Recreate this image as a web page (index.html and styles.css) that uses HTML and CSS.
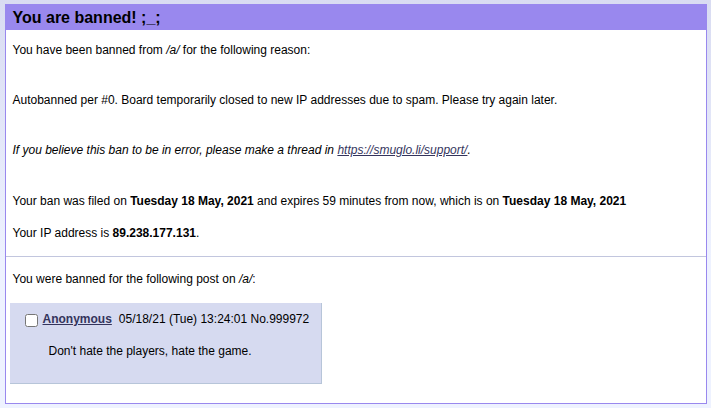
FILE: index.html
```html
<!DOCTYPE html>
<html lang="en">

<head>
    <meta charset="UTF-8">
    <meta name="viewport" content="width=device-width, initial-scale=1.0">
    <title>Banned</title>
    <link rel="stylesheet" href="styles.css">
</head>

<body>
    <div class="ban">
        <h2>You are banned! ;_;</h2>
        <div class="ban-body">
            <p>You have been banned from <em>/a/</em> for the following reason:</p>
            <p class="spaced">Autobanned per #0. Board temporarily closed to new IP addresses due to spam. Please try again later.</p>
            <p class="spaced"><em>If you believe this ban to be in error, please make a thread in <a href="#">https://smuglo.li/support/</a>.</em></p>
            <p class="spaced wide">Your ban was filed on <strong>Tuesday 18 May, 2021</strong> and expires 59 minutes from now, which is on <strong>Tuesday 18 May, 2021</strong></p>
            <p class="close">Your IP address is <strong>89.238.177.131</strong>.</p>
        </div>
        <hr class="rule">
        <div class="ban-post">
            <p>You were banned for the following post on <em>/a/</em>:</p>
            <div class="post">
                <div class="intro">
                    <input type="checkbox" class="delete">
                    <a href="#" class="name">Anonymous</a>
                    <span class="time">05/18/21 (Tue) 13:24:01 No.999972</span>
                </div>
                <div class="message">Don't hate the players, hate the game.</div>
            </div>
        </div>
    </div>
</body>

</html>
```

FILE: styles.css
```css
body {
    background: #eef2ff linear-gradient(#d9dcf2, #eef2ff 260px) no-repeat;
    font-family: "Liberation Sans", Arial, sans-serif;
    font-size: 12px;
    line-height: 14px;
    color: #000;
    margin: 0;
    padding: 4px 0 0;
    min-height: 408px;
    box-sizing: border-box;
}

a {
    color: #34345c;
}

.ban {
    background-color: #fff;
    border: 1px solid #9988ee;
    width: 700px;
    margin: 0 auto;
}

.ban h2 {
    background-color: #9988ee;
    color: #000;
    font-size: 16px;
    line-height: 25px;
    height: 25px;
    margin: 0;
    padding: 0 7px;
}

.ban p {
    margin: 0;
    padding: 0 7px;
}

.ban-body {
    padding-top: 13px;
}

.ban .spaced {
    margin-top: 36px;
}

.ban .wide {
    margin-top: 37px;
}

.ban .close {
    margin-top: 18px;
}

.rule {
    border: 0;
    border-top: 1px solid #c2c6de;
    margin: 16px 0 0;
}

.ban-post {
    padding: 15px 0 19px;
}

.post {
    background-color: #d6daf0;
    border-right: 1px solid #b7c5d9;
    border-bottom: 1px solid #b7c5d9;
    box-sizing: border-box;
    width: 312px;
    height: 81px;
    margin: 17px 0 0 4px;
    padding: 9px 0 0 15px;
}

.intro {
    display: flex;
    align-items: flex-start;
}

.delete {
    width: 13px;
    height: 13px;
    margin: 2px 5px 0 0;
}

.name {
    font-weight: bold;
    margin-right: 7px;
}

.message {
    margin: 17px 0 0 24px;
}
```
